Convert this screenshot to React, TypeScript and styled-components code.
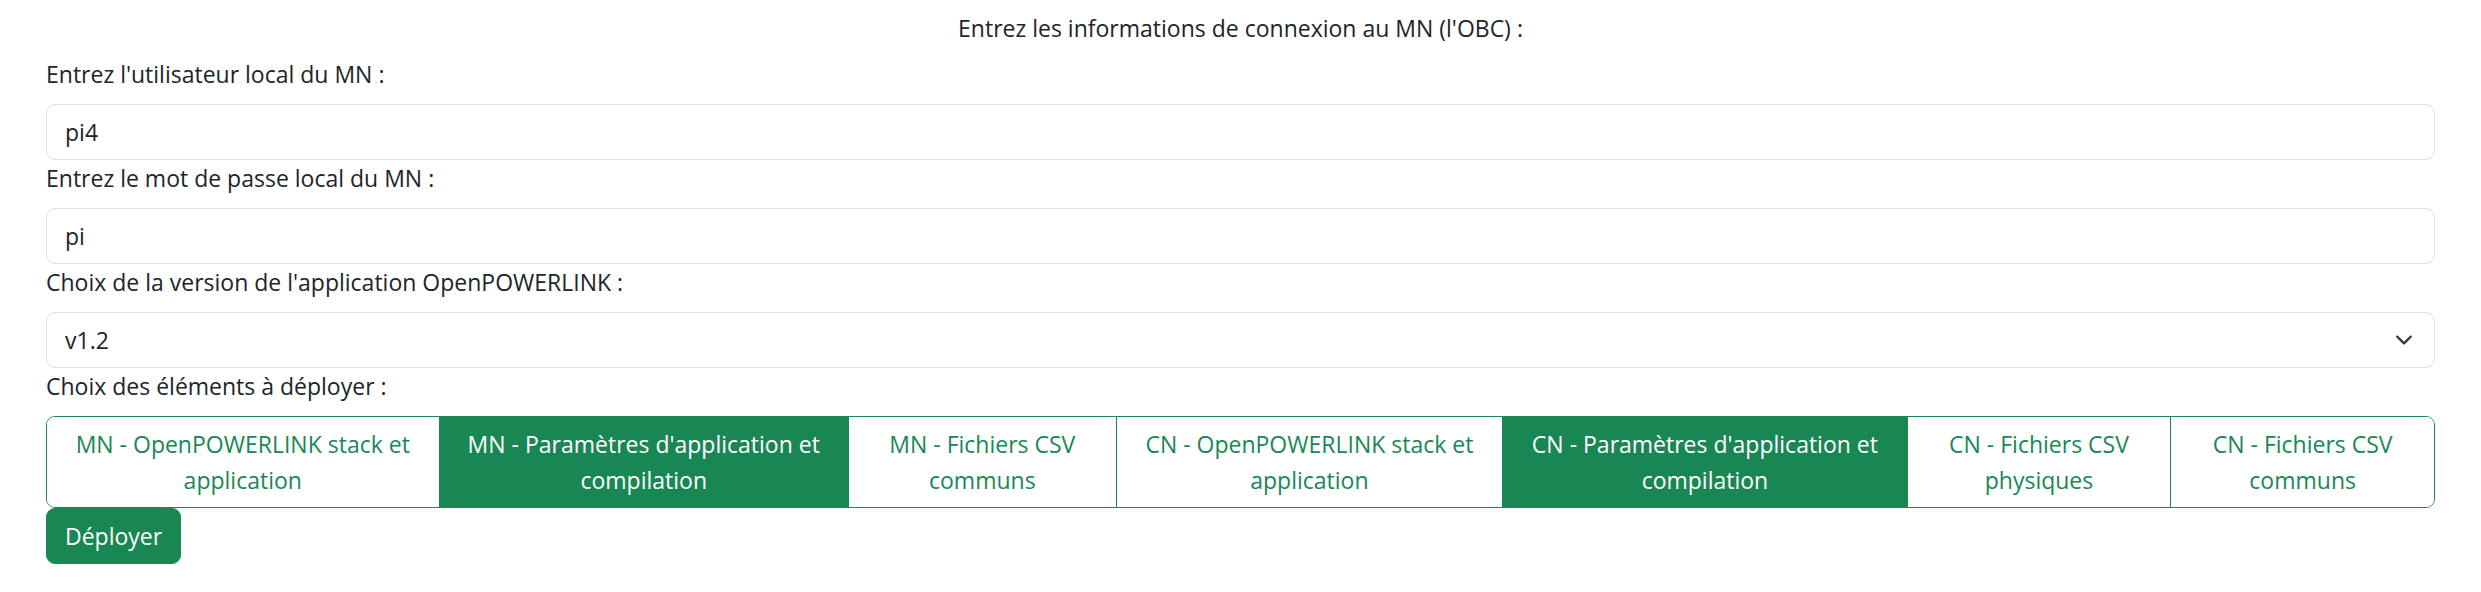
import React from "react";
import styled, { createGlobalStyle } from "styled-components";

const GlobalStyle = createGlobalStyle`
  html, body {
    margin: 0;
    padding: 0;
    background: #ffffff;
  }
  body {
    font-family: "Open Sans", "Noto Sans", "Liberation Sans", sans-serif;
    font-size: 23px;
    line-height: 36px;
    color: #212529;
  }
  *, *::before, *::after {
    box-sizing: border-box;
  }
`;

const Page = styled.div`
  display: flex;
  flex-direction: column;
  padding: 10px 46px 0 46px;
`;

const Title = styled.div`
  text-align: center;
  line-height: 36px;
  margin-bottom: 10px;
`;

const FieldLabel = styled.label`
  display: block;
  line-height: 36px;
  margin-bottom: 12px;
`;

const TextInput = styled.input`
  display: block;
  width: 100%;
  height: 56px;
  padding: 9px 18px;
  font-family: "Open Sans", "Noto Sans", "Liberation Sans", sans-serif;
  font-size: 23px;
  line-height: 36px;
  color: #212529;
  background: #ffffff;
  border: 1px solid #dee2e6;
  border-radius: 9px;
  outline: none;
`;

const SelectWrap = styled.div`
  position: relative;
  width: 100%;
`;

const Select = styled.select`
  display: block;
  width: 100%;
  height: 56px;
  padding: 9px 54px 9px 18px;
  font-family: "Open Sans", "Noto Sans", "Liberation Sans", sans-serif;
  font-size: 23px;
  line-height: 36px;
  color: #212529;
  background: #ffffff;
  border: 1px solid #dee2e6;
  border-radius: 9px;
  outline: none;
  appearance: none;
  -webkit-appearance: none;
`;

const Chevron = styled.svg`
  position: absolute;
  right: 19px;
  top: 50%;
  transform: translateY(-50%);
  pointer-events: none;
`;

const ButtonGroup = styled.div<{ $columns: string }>`
  display: grid;
  grid-template-columns: ${(p) => p.$columns};
  border: 1px solid #198754;
  border-radius: 9px;
  overflow: hidden;
`;

const ToggleButton = styled.button<{ $active: boolean; $first: boolean }>`
  display: flex;
  align-items: center;
  justify-content: center;
  min-width: 0;
  padding: 9px 18px;
  margin: 0;
  border: none;
  border-left: ${(p) => (p.$first ? "none" : "1px solid #198754")};
  background: ${(p) => (p.$active ? "#198754" : "#ffffff")};
  color: ${(p) => (p.$active ? "#ffffff" : "#198754")};
  font-family: "Open Sans", "Noto Sans", "Liberation Sans", sans-serif;
  font-size: 23px;
  line-height: 36px;
  text-align: center;
  cursor: pointer;
`;

const ButtonText = styled.span`
  display: block;
  white-space: nowrap;
`;

const SubmitRow = styled.div`
  display: flex;
`;

const PrimaryButton = styled.button`
  height: 56px;
  padding: 9px 18px;
  border: 1px solid #198754;
  border-radius: 9px;
  background: #198754;
  color: #ffffff;
  font-family: "Open Sans", "Noto Sans", "Liberation Sans", sans-serif;
  font-size: 23px;
  line-height: 36px;
  cursor: pointer;
`;

type Deploy = { lines: [string, string]; active: boolean; width: number };

const deployItems: Deploy[] = [
  { lines: ["MN - OpenPOWERLINK stack et", "application"], active: false, width: 392 },
  { lines: ["MN - Paramètres d'application et", "compilation"], active: true, width: 410 },
  { lines: ["MN - Fichiers CSV", "communs"], active: false, width: 268 },
  { lines: ["CN - OpenPOWERLINK stack et", "application"], active: false, width: 387 },
  { lines: ["CN - Paramètres d'application et", "compilation"], active: true, width: 405 },
  { lines: ["CN - Fichiers CSV", "physiques"], active: false, width: 264 },
  { lines: ["CN - Fichiers CSV", "communs"], active: false, width: 264 },
];

export default function App() {
  const columns = deployItems.map((d) => `${d.width}fr`).join(" ");
  return (
    <>
      <GlobalStyle />
      <Page>
        <Title>Entrez les informations de connexion au MN (l'OBC) :</Title>

        <FieldLabel htmlFor="user">Entrez l'utilisateur local du MN :</FieldLabel>
        <TextInput id="user" type="text" defaultValue="pi4" />

        <FieldLabel htmlFor="pass">Entrez le mot de passe local du MN :</FieldLabel>
        <TextInput id="pass" type="text" defaultValue="pi" />

        <FieldLabel htmlFor="version">Choix de la version de l'application OpenPOWERLINK :</FieldLabel>
        <SelectWrap>
          <Select id="version" defaultValue="v1.2">
            <option value="v1.2">v1.2</option>
            <option value="v1.1">v1.1</option>
          </Select>
          <Chevron width="24" height="18" viewBox="0 0 16 16" aria-hidden="true">
            <path
              d="m2 5 6 6 6-6"
              fill="none"
              stroke="#343a40"
              strokeWidth="2"
              strokeLinecap="round"
              strokeLinejoin="round"
            />
          </Chevron>
        </SelectWrap>

        <FieldLabel>Choix des éléments à déployer :</FieldLabel>
        <ButtonGroup $columns={columns}>
          {deployItems.map((d, i) => (
            <ToggleButton key={i} type="button" $active={d.active} $first={i === 0}>
              <span>
                <ButtonText>{d.lines[0]}</ButtonText>
                <ButtonText>{d.lines[1]}</ButtonText>
              </span>
            </ToggleButton>
          ))}
        </ButtonGroup>

        <SubmitRow>
          <PrimaryButton type="button">Déployer</PrimaryButton>
        </SubmitRow>
      </Page>
    </>
  );
}
